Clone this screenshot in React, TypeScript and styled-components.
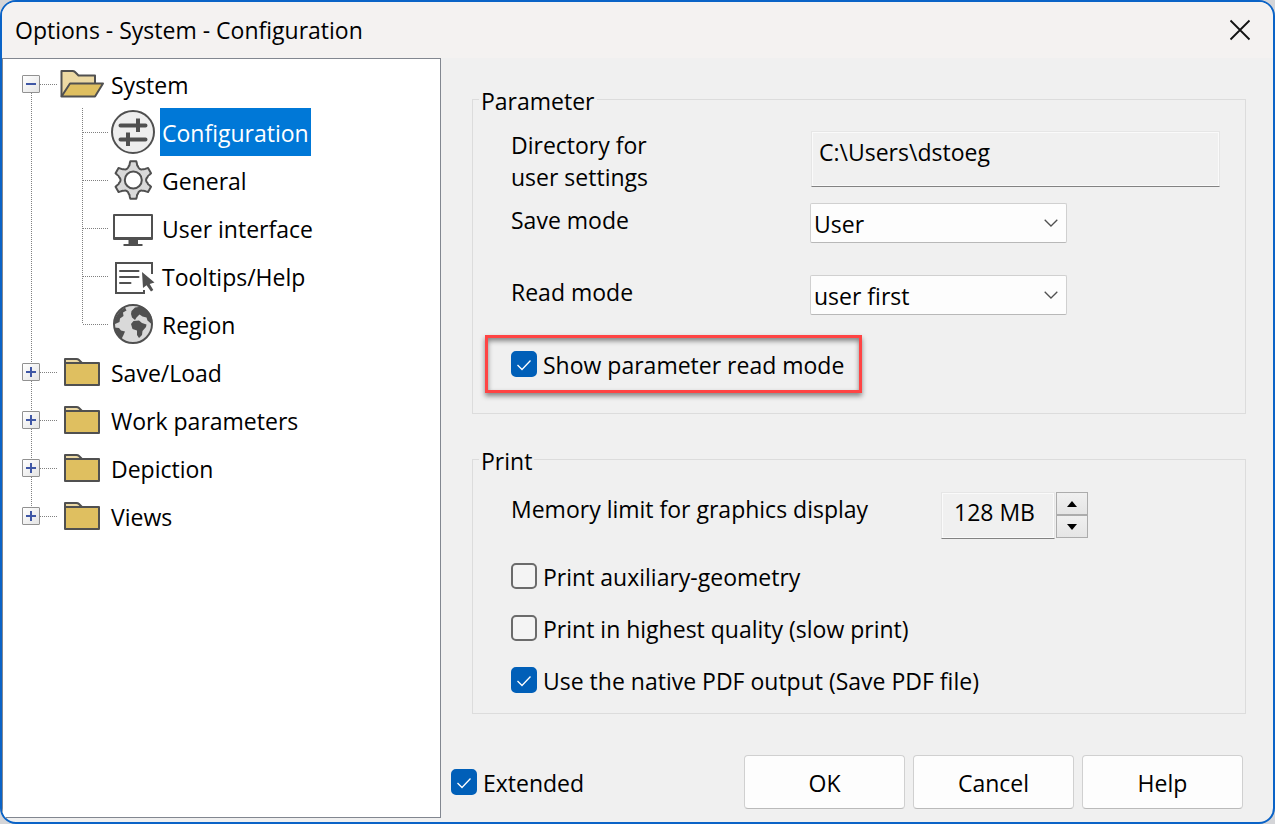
import React, { useState } from 'react';
import styled, { createGlobalStyle, css } from 'styled-components';

const GlobalStyle = createGlobalStyle`
  *, *::before, *::after { box-sizing: border-box; }
  body {
    margin: 0;
    background: #d4d5d8;
    color: #000;
    font-family: "Open Sans", "Noto Sans", sans-serif;
    font-size: 23px;
    line-height: 32px;
  }
  button, input, select { font: inherit; color: inherit; margin: 0; }
`;

const ink = '#505050';

/* ---------- window frame ---------- */

const Dialog = styled.div`
  display: flex;
  flex-direction: column;
  min-height: 100vh;
  border: 2px solid #0a63c7;
  border-radius: 16px;
  background: #f0f0f0;
  overflow: hidden;
`;

const TitleBar = styled.header`
  display: flex;
  align-items: center;
  justify-content: space-between;
  height: 56px;
  padding: 0 20px 0 13px;
  background: #f4f2f1;
`;

const Title = styled.h1`
  margin: 0;
  font-size: inherit;
  font-weight: 400;
`;

const CloseButton = styled.button`
  display: flex;
  padding: 0;
  border: 0;
  background: none;
`;

const Body = styled.div`
  display: flex;
  flex: 1;
`;

/* ---------- tree ---------- */

const TreePanel = styled.nav`
  width: 439px;
  flex: none;
  margin-bottom: 4px;
  padding-top: 1px;
  border: 1px solid #828790;
  background: #fff;
`;

const TreeList = styled.ul`
  margin: 0;
  padding: 0;
  list-style: none;
`;

const TreeRow = styled.div`
  display: flex;
  align-items: center;
  height: 48px;
  padding-left: 19px;
`;

type Span = 'full' | 'top' | 'bottom';

const Trunk = styled.div<{ $span: Span }>`
  display: flex;
  align-items: center;
  align-self: stretch;
  width: 18px;
  background: linear-gradient(transparent 50%, #808080 50%) 9px 0 / 1px 2px repeat-y;
  ${({ $span }) => $span !== 'full' && css`
    align-self: ${$span === 'top' ? 'flex-start' : 'flex-end'};
    height: 50%;
    align-items: ${$span === 'top' ? 'flex-end' : 'flex-start'};
  `}
`;

const Toggle = styled.button<{ $span: Span }>`
  display: flex;
  flex: none;
  width: 18px;
  height: 18px;
  padding: 0;
  border: 1px solid #919191;
  border-radius: 1px;
  background: linear-gradient(135deg, #fff, #e4e4e4);
  margin: ${({ $span }) => ($span === 'top' ? '0 0 -9px' : $span === 'bottom' ? '-9px 0 0' : '0')};
`;

const Branch = styled.div<{ $width: number }>`
  width: ${({ $width }) => $width}px;
  height: 1px;
  background: linear-gradient(90deg, #808080 50%, transparent 50%) 0 0 / 2px 1px repeat-x;
`;

const ChildTrunk = styled.div<{ $last?: boolean }>`
  align-self: flex-start;
  width: 1px;
  height: ${({ $last }) => ($last ? '50%' : '100%')};
  margin-left: 42px;
  background: linear-gradient(#808080 50%, transparent 50%) 0 0 / 1px 2px repeat-y;
`;

const TreeIcon = styled.svg.attrs({ width: 44, height: 44, viewBox: '0 0 44 44', 'aria-hidden': true })`
  flex: none;
  margin: 0 5px 0 3px;
`;

const TreeLabel = styled.a<{ $selected?: boolean }>`
  height: 48px;
  padding: 9px 2px 0;
  color: ${({ $selected }) => ($selected ? '#fff' : '#000')};
  background: ${({ $selected }) => ($selected ? '#0078d7' : 'transparent')};
  text-decoration: none;
  white-space: nowrap;
`;

/* ---------- settings ---------- */

const Settings = styled.main`
  display: flex;
  flex: 1;
  flex-direction: column;
  min-width: 0;
  padding: 25px 27px 13px 10px;
`;

const Group = styled.fieldset`
  min-width: 0;
  margin: 0 0 29px 21px;
  padding: 13px 25px 20px 38px;
  border: 1px solid #dcdcdc;
`;

const PrintGroup = styled(Group)`
  margin-bottom: 41px;
  padding-top: 17px;
  padding-bottom: 16px;
`;

const Legend = styled.legend`
  margin-left: -32px;
  padding: 4px 2px 0;
  line-height: 28px;
`;

const Field = styled.div<{ $gap: number }>`
  display: flex;
  align-items: flex-start;
  margin-bottom: ${({ $gap }) => $gap}px;
`;

const FieldLabel = styled.label<{ $width: number }>`
  flex: none;
  width: ${({ $width }) => $width}px;
  padding-top: 1px;
`;

const sunken = css`
  border: 1px solid;
  border-color: #e6e6e6 #e6e6e6 #828282 #e6e6e6;
  border-radius: 0;
  background: #f0f0f0;
  box-shadow: inset 0 0 0 1px #fafafa;
  outline: 0;
`;

const PathInput = styled.input`
  ${sunken}
  flex: 1;
  min-width: 0;
  height: 56px;
  margin-top: 3px;
  padding: 0 8px 14px 7px;
`;

const SizeInput = styled.input`
  ${sunken}
  width: 114px;
  height: 47px;
  padding: 0 12px 8px;
`;

const SelectBox = styled.div`
  display: grid;
  align-items: center;
  width: 257px;
  height: 40px;
`;

const Select = styled.select`
  grid-area: 1 / 1;
  width: 100%;
  height: 40px;
  padding: 2px 30px 0 3px;
  border: 1px solid #d0d0d0;
  border-bottom-color: #b8b8b8;
  border-radius: 2px;
  background: #fdfdfd;
  appearance: none;
`;

const Chevron = styled.svg`
  grid-area: 1 / 1;
  justify-self: end;
  margin-right: 9px;
  pointer-events: none;
`;

const CheckLabel = styled.label<{ $gap?: number }>`
  display: flex;
  align-items: center;
  gap: 6px;
  width: fit-content;
  margin-bottom: ${({ $gap = 0 }) => $gap}px;
  padding-top: 1px;
  white-space: nowrap;
`;

const CheckMark = styled.span`
  display: grid;
  flex: none;
  width: 26px;
  height: 26px;
  margin-bottom: 2px;
`;

const CheckInput = styled.input`
  grid-area: 1 / 1;
  width: 26px;
  height: 26px;
  border: 2px solid #6b6b6b;
  border-radius: 5px;
  background: #f4f4f4;
  appearance: none;
  &:checked { border-color: #005fb8; background: #005fb8; }
`;

const CheckTick = styled.svg`
  grid-area: 1 / 1;
  pointer-events: none;
`;

const Highlight = styled.div`
  width: fit-content;
  margin-left: -26px;
  padding: 10px 15px 9px 23px;
  border: 3px solid #ff4444;
  box-shadow: 0 3px 5px rgba(0, 0, 0, 0.45), inset 0 3px 5px rgba(0, 0, 0, 0.45);
`;

const Spinner = styled.div`
  display: flex;
  flex-direction: column;
  width: 32px;
  margin-left: 1px;
`;

const SpinButton = styled.button`
  display: flex;
  align-items: center;
  justify-content: center;
  height: 23px;
  padding: 0;
  border: 1px solid #acacac;
  background: linear-gradient(#f0f0f0, #e5e5e5);
`;

const Footer = styled.footer`
  display: flex;
  align-items: center;
  justify-content: space-between;
  margin-right: 3px;
`;

const Actions = styled.div`
  display: flex;
  gap: 8px;
`;

const ActionButton = styled.button`
  width: 161px;
  height: 54px;
  padding: 2px 0 0;
  border: 1px solid #d0d0d0;
  border-bottom-color: #bababa;
  border-radius: 4px;
  background: #fdfdfd;
`;

/* ---------- icons ---------- */

const FolderOpen = () => (
  <TreeIcon fill="#ecd9a3" stroke={ink} strokeWidth="2" strokeLinejoin="round">
    <path d="M1.500 34.500V9H12.500Q14 9 15 10L18.500 13.500H35V22" />
    <path fill="#dfbf60" d="M10 21.500H43L35 34.500H1.500Z" />
  </TreeIcon>
);

const FolderClosed = () => (
  <TreeIcon fill="#dfbf60" stroke={ink} strokeWidth="2" strokeLinejoin="round">
    <path fill="#ecd9a3" d="M5 13V9H16.500Q18 9 19 10L22 13Z" />
    <path d="M5 13H39V35H5Z" />
  </TreeIcon>
);

const Sliders = () => (
  <TreeIcon fill="none" stroke={ink} strokeWidth="4">
    <circle cx="22" cy="22" r="21" fill="#eeeeee" strokeWidth="2" />
    <path strokeLinecap="round" d="M9.500 15.500H34.500M9.500 29.500H34.500" />
    <path d="M27 8.500V22M17 22.500V36" />
  </TreeIcon>
);

const gearPath = (() => {
  const at = (deg: number, r: number) => {
    const a = (deg * Math.PI) / 180;
    return `${(22.3 + r * Math.cos(a)).toFixed(2)} ${(22 + r * Math.sin(a)).toFixed(2)}`;
  };
  let d = '';
  for (let k = 0; k < 6; k += 1) {
    const c = k * 60 - 90;
    d += `${k ? 'L' : 'M'}${at(c - 18, 14.6)}Q${at(c - 14, 15)} ${at(c - 12, 17)}L${at(c - 9, 19)}L${at(c + 9, 19)}L${at(c + 12, 17)}Q${at(c + 14, 15)} ${at(c + 18, 14.6)}Q${at(c + 30, 11.2)} ${at(c + 42, 14.6)}`;
  }
  return `${d}Z`;
})();

const Gear = () => (
  <TreeIcon fill="#d9d9d9" stroke={ink} strokeWidth="2" strokeLinejoin="round">
    <path d={gearPath} />
    <circle cx="22.300" cy="22" r="8.500" fill="#fff" />
  </TreeIcon>
);

const Monitor = () => (
  <TreeIcon fill={ink}>
    <path fillRule="evenodd" d="M3 8H41Q42 8 42 9V33Q42 34 41 34H3Q2 34 2 33V9Q2 8 3 8ZM4 10V31H40V10Z" />
    <path d="M17.500 34H27V38H31.500V40H12.500V38H17.500Z" />
  </TreeIcon>
);

const HelpPage = () => (
  <TreeIcon fill="none" stroke={ink} strokeWidth="2">
    <path d="M41 20V9H5V39H33V36" />
    <path strokeLinecap="round" d="M9 17H27.500M9 23H27.500M9 29H19.500" />
    <path fill={ink} stroke="none" d="M31 18L43.500 28.500L38.700 30L42.300 36L40 37.500L35.500 31.200L32 34Z" />
  </TreeIcon>
);

const Globe = () => (
  <TreeIcon fill="#d9d9d9" stroke={ink} strokeWidth="2">
    <circle cx="22" cy="22" r="19" />
    <g fill={ink} stroke="none">
      <path d="M20.500 9L24 5.500L31 4.500Q38 8 40.500 15L40.500 22L36.500 18.500L35.500 15.500L31.500 14.500L28.500 12.500L25.500 15.500L24 18L21 15.500L20 12Z" />
      <path d="M20 22L22.500 19L28 18.500L31 21L35.500 22.500L35 25L31.500 29L31 33L28 36L26 33L26 28.500L21.500 27Z" />
      <path d="M4 17Q7 9.500 14 5.500L15.500 8.500L12 10.500L12.500 14L9 16.500L8.500 20L4 22Z" />
      <path d="M3 25.500L8 26L10 28.500L14 29.500L12.500 33L10.500 37Q4.500 32.500 3 25.500Z" />
    </g>
  </TreeIcon>
);

/* ---------- parts ---------- */

function Check({ label, initial = false, gap }: { label: string; initial?: boolean; gap?: number }) {
  const [on, setOn] = useState(initial);
  return (
    <CheckLabel $gap={gap}>
      <CheckMark>
        <CheckInput type="checkbox" checked={on} onChange={() => setOn(!on)} />
        {on && (
          <CheckTick width="26" height="26" viewBox="0 0 26 26" fill="none" stroke="#fff" strokeWidth="1.300" aria-hidden>
            <path d="M6.500 14L11 18.500L19.500 9.500" />
          </CheckTick>
        )}
      </CheckMark>
      {label}
    </CheckLabel>
  );
}

function Dropdown({ id, options }: { id: string; options: string[] }) {
  return (
    <SelectBox>
      <Select id={id} defaultValue={options[0]}>
        {options.map((o) => <option key={o}>{o}</option>)}
      </Select>
      <Chevron width="14" height="8" viewBox="0 0 14 8" fill="none" stroke="#505050" strokeWidth="1.300" aria-hidden>
        <path d="M0.700 0.700L7 7L13.300 0.700" />
      </Chevron>
    </SelectBox>
  );
}

function Branching({ label, open, span, icon }: { label: string; open?: boolean; span: Span; icon: React.ReactNode }) {
  return (
    <TreeRow>
      <Trunk $span={span}>
        <Toggle $span={span} aria-label={`${open ? 'Collapse' : 'Expand'} ${label}`} aria-expanded={!!open}>
          <svg width="16" height="16" viewBox="0 0 16 16" stroke="#3f57a5" strokeWidth="2" aria-hidden>
            <path d={open ? 'M3 8H13' : 'M3 8H13M8 3V13'} />
          </svg>
        </Toggle>
      </Trunk>
      <Branch $width={17} />
      {icon}
      <TreeLabel href="#">{label}</TreeLabel>
    </TreeRow>
  );
}

const pages = [
  { label: 'Configuration', icon: <Sliders /> },
  { label: 'General', icon: <Gear /> },
  { label: 'User interface', icon: <Monitor /> },
  { label: 'Tooltips/Help', icon: <HelpPage /> },
  { label: 'Region', icon: <Globe /> },
];

const folders = ['Save/Load', 'Work parameters', 'Depiction', 'Views'];

export default function App() {
  const [memory, setMemory] = useState(128);
  return (
    <>
      <GlobalStyle />
      <Dialog role="dialog" aria-labelledby="dialog-title">
        <TitleBar>
          <Title id="dialog-title">Options - System - Configuration</Title>
          <CloseButton aria-label="Close">
            <svg width="26" height="26" viewBox="0 0 26 26" stroke="#111" strokeWidth="1.800" aria-hidden>
              <path d="M3.500 3.500L22.500 22.500M22.500 3.500L3.500 22.500" />
            </svg>
          </CloseButton>
        </TitleBar>
        <Body>
          <TreePanel aria-label="Option pages">
            <TreeList>
              <li>
                <Branching label="System" open span="bottom" icon={<FolderOpen />} />
                <TreeList>
                  {pages.map((p, i) => (
                    <li key={p.label}>
                      <TreeRow>
                        <Trunk $span="full" />
                        <ChildTrunk $last={i === pages.length - 1} />
                        <Branch $width={25} />
                        {p.icon}
                        <TreeLabel href="#" $selected={i === 0}>{p.label}</TreeLabel>
                      </TreeRow>
                    </li>
                  ))}
                </TreeList>
              </li>
              {folders.map((f, i) => (
                <li key={f}>
                  <Branching label={f} span={i === folders.length - 1 ? 'top' : 'full'} icon={<FolderClosed />} />
                </li>
              ))}
            </TreeList>
          </TreePanel>
          <Settings>
            <Group>
              <Legend>Parameter</Legend>
              <Field $gap={10}>
                <FieldLabel $width={300} htmlFor="directory">Directory for<br />user settings</FieldLabel>
                <PathInput id="directory" readOnly value="C:\Users\dstoeg" />
              </Field>
              <Field $gap={32}>
                <FieldLabel $width={299} htmlFor="save-mode">Save mode</FieldLabel>
                <Dropdown id="save-mode" options={['User', 'Office']} />
              </Field>
              <Field $gap={20}>
                <FieldLabel $width={299} htmlFor="read-mode">Read mode</FieldLabel>
                <Dropdown id="read-mode" options={['user first', 'office first']} />
              </Field>
              <Highlight>
                <Check label="Show parameter read mode" initial />
              </Highlight>
            </Group>
            <PrintGroup>
              <Legend>Print</Legend>
              <Field $gap={21}>
                <FieldLabel $width={430} htmlFor="memory">Memory limit for graphics display</FieldLabel>
                <SizeInput id="memory" readOnly value={`${memory} MB`} />
                <Spinner>
                  <SpinButton aria-label="Increase" onClick={() => setMemory(memory + 16)}>
                    <svg width="10" height="6" viewBox="0 0 10 6" aria-hidden><path d="M5 0L10 6H0Z" /></svg>
                  </SpinButton>
                  <SpinButton aria-label="Decrease" onClick={() => setMemory(Math.max(16, memory - 16))}>
                    <svg width="10" height="6" viewBox="0 0 10 6" aria-hidden><path d="M5 6L10 0H0Z" /></svg>
                  </SpinButton>
                </Spinner>
              </Field>
              <Check label="Print auxiliary-geometry" gap={19} />
              <Check label="Print in highest quality (slow print)" gap={19} />
              <Check label="Use the native PDF output (Save PDF file)" initial />
            </PrintGroup>
            <Footer>
              <Check label="Extended" initial />
              <Actions>
                <ActionButton>OK</ActionButton>
                <ActionButton>Cancel</ActionButton>
                <ActionButton>Help</ActionButton>
              </Actions>
            </Footer>
          </Settings>
        </Body>
      </Dialog>
    </>
  );
}
